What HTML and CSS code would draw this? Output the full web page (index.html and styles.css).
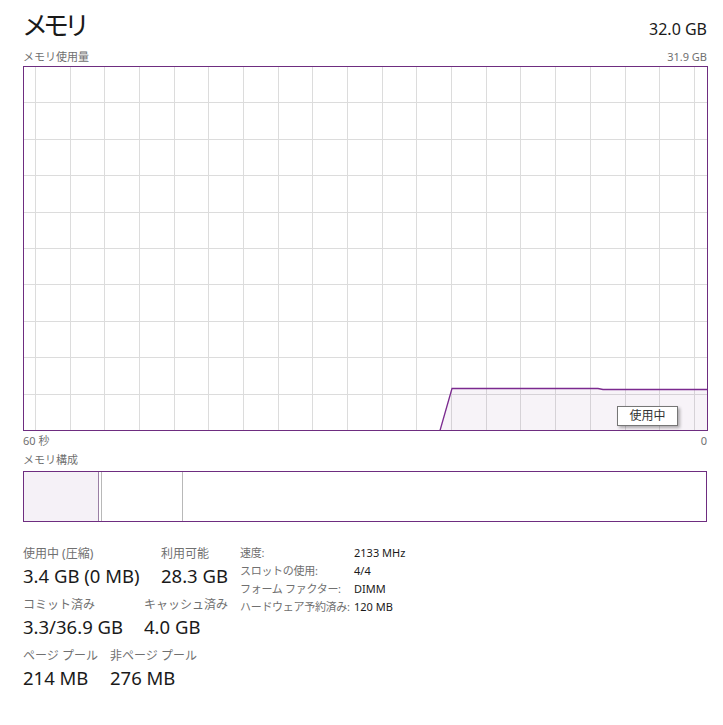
FILE: index.html
```html
<!DOCTYPE html>
<html lang="ja"><head><meta charset="UTF-8">
<title>メモリ</title>
<link rel="stylesheet" href="styles.css">
</head>
<body>
<div class="head">
<div class="title">メモリ</div>
<div class="total">32.0 GB</div>
</div>
<div class="sub">
<span>メモリ使用量</span>
<span>31.9 GB</span>
</div>
<div class="graph">
<svg width="685" height="365" viewBox="0 0 685 365">
<g stroke="#dcdcdc" stroke-width="1">
<line x1="12.5" y1="0" x2="12.5" y2="365"/>
<line x1="47.5" y1="0" x2="47.5" y2="365"/>
<line x1="81.5" y1="0" x2="81.5" y2="365"/>
<line x1="116.5" y1="0" x2="116.5" y2="365"/>
<line x1="151.5" y1="0" x2="151.5" y2="365"/>
<line x1="185.5" y1="0" x2="185.5" y2="365"/>
<line x1="220.5" y1="0" x2="220.5" y2="365"/>
<line x1="255.5" y1="0" x2="255.5" y2="365"/>
<line x1="289.5" y1="0" x2="289.5" y2="365"/>
<line x1="324.5" y1="0" x2="324.5" y2="365"/>
<line x1="359.5" y1="0" x2="359.5" y2="365"/>
<line x1="393.5" y1="0" x2="393.5" y2="365"/>
<line x1="428.5" y1="0" x2="428.5" y2="365"/>
<line x1="463.5" y1="0" x2="463.5" y2="365"/>
<line x1="497.5" y1="0" x2="497.5" y2="365"/>
<line x1="532.5" y1="0" x2="532.5" y2="365"/>
<line x1="567.5" y1="0" x2="567.5" y2="365"/>
<line x1="602.5" y1="0" x2="602.5" y2="365"/>
<line x1="636.5" y1="0" x2="636.5" y2="365"/>
<line x1="671.5" y1="0" x2="671.5" y2="365"/>
<line x1="0" y1="36.5" x2="685" y2="36.5"/>
<line x1="0" y1="73.5" x2="685" y2="73.5"/>
<line x1="0" y1="109.5" x2="685" y2="109.5"/>
<line x1="0" y1="146.5" x2="685" y2="146.5"/>
<line x1="0" y1="182.5" x2="685" y2="182.5"/>
<line x1="0" y1="218.5" x2="685" y2="218.5"/>
<line x1="0" y1="255.5" x2="685" y2="255.5"/>
<line x1="0" y1="291.5" x2="685" y2="291.5"/>
<line x1="0" y1="328.5" x2="685" y2="328.5"/>
</g>
<polygon points="417,364.5 429,322.5 575,322.5 580,323.5 684,323.5 684,364.5" fill="#703080" fill-opacity="0.06" stroke="none"/>
<polyline points="417,364.5 429,322.5 575,322.5 580,323.5 684,323.5" fill="none" stroke="#7b2a8f" stroke-width="1.3"/>
<rect x="0.5" y="0.5" width="684" height="364" fill="none" stroke="#6e2d80" stroke-width="1"/>
</svg>
<div class="tip">使用中</div>
</div>
<div class="axis">
<span>60 秒</span>
<span>0</span>
</div>
<div class="label">メモリ構成</div>
<div class="comp">
<div class="used"></div>
<div class="mod"></div>
<div class="stby"></div>
</div>
<div class="stats">
<div class="left">
<div class="row">
<div class="stat w138"><div class="lbl">使用中 (圧縮)</div><div class="val">3.4 GB (0 MB)</div></div>
<div class="stat"><div class="lbl">利用可能</div><div class="val">28.3 GB</div></div>
</div>
<div class="row">
<div class="stat w121"><div class="lbl">コミット済み</div><div class="val">3.3/36.9 GB</div></div>
<div class="stat"><div class="lbl">キャッシュ済み</div><div class="val">4.0 GB</div></div>
</div>
<div class="row">
<div class="stat w87"><div class="lbl">ページ プール</div><div class="val">214 MB</div></div>
<div class="stat"><div class="lbl">非ページ プール</div><div class="val">276 MB</div></div>
</div>
</div>
<table class="info">
<tr><td class="k">速度:</td><td>2133 MHz</td></tr>
<tr><td class="k">スロットの使用:</td><td>4/4</td></tr>
<tr><td class="k">フォーム ファクター:</td><td>DIMM</td></tr>
<tr><td class="k">ハードウェア予約済み:</td><td>120 MB</td></tr>
</table>
</div>
</body>
</html>
```
FILE: styles.css
```css
body{margin:0;padding:0 16px 0 23px;font-family:"Noto Sans","Noto Sans CJK JP",sans-serif;color:#1a1a1a;background:#fff;}
.head{display:flex;justify-content:space-between;align-items:baseline;height:48px;}
.title{font:26px "Noto Sans CJK JP","Noto Sans",sans-serif;line-height:48px;letter-spacing:-5px;margin-left:-1px;}
.total{font-size:16px;}
.sub,.axis{display:flex;justify-content:space-between;font-size:11px;color:#707070;line-height:18px;}
.graph{position:relative;height:365px;}
.graph svg{display:block;}
.tip{position:absolute;left:594px;top:340px;width:59px;height:18px;line-height:18px;text-align:center;font-size:12px;color:#333;background:#fff;border:1px solid #767676;box-shadow:2px 2px 3px rgba(0,0,0,0.3);}
.axis{margin-top:1px;}
.label{font-size:11px;color:#707070;line-height:18px;margin-top:1px;}
.comp{display:flex;height:49px;border:1px solid #6e2d80;margin-top:2px;}
.used{width:74px;background:#f5f1f7;border-right:1px solid #9a7fa5;}
.mod{width:81px;border-left:2px solid #fff;box-shadow:inset 1px 0 0 #b8b8b8;border-right:1px solid #b8b8b8;}
.stby{flex:1;}
.stats{display:flex;align-items:flex-start;margin-top:23px;}
.left{width:217px;}
.row{display:flex;margin-bottom:7px;}
.stat{white-space:nowrap;}
.w138{width:138px;}
.w121{width:121px;}
.w87{width:87px;}
.lbl{font-size:12px;color:#707070;line-height:17px;}
.val{font-size:18.5px;line-height:27px;}
.info{border-collapse:collapse;font-size:11px;margin-top:-1px;}
.info td{padding:0;height:18px;line-height:18px;white-space:nowrap;}
.info .k{width:114px;color:#707070;letter-spacing:-0.3px;}
```
